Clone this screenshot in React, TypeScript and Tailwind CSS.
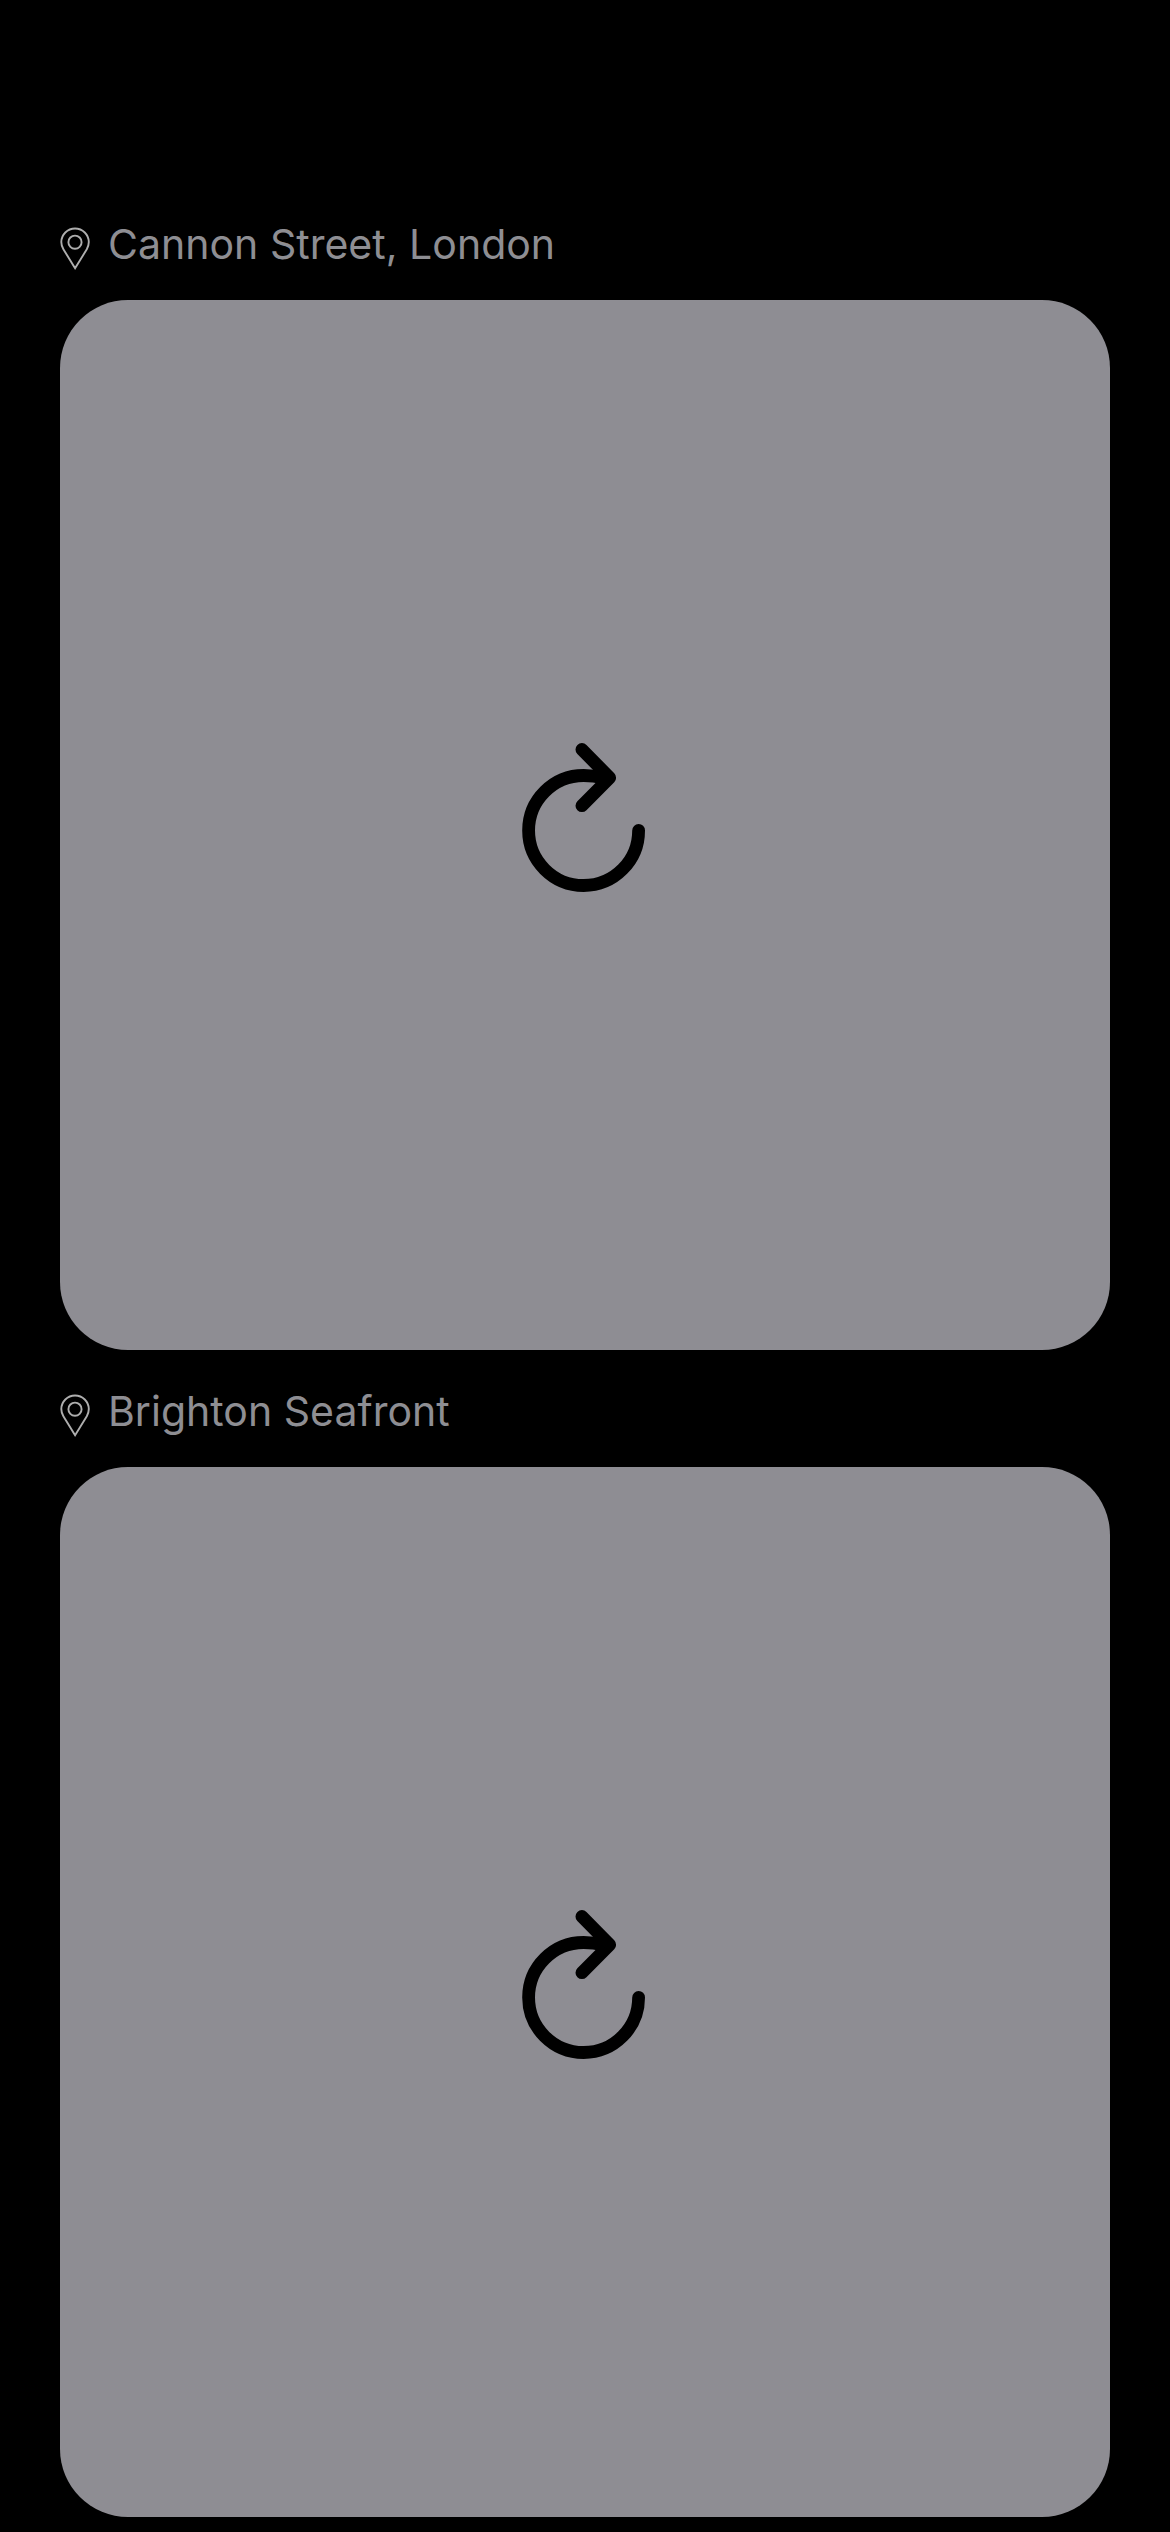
const places = ["Cannon Street, London", "Brighton Seafront"];

function PinIcon() {
  return (
    <svg width="30" height="44" viewBox="0 0 30 44" fill="none" stroke="#aeaeae" strokeWidth="1.9" className="shrink-0">
      <path d="M15.1 41.2 L3.4 22.3 C1.9 19.8 1.3 17.6 1.3 15.1 A13.75 13.6 0 0 1 28.8 15.1 C28.8 17.6 28.2 19.8 26.8 22.3 Z" />
      <circle cx="15" cy="15.2" r="6.6" />
    </svg>
  );
}

function ReloadIcon() {
  return (
    <svg width="180" height="190" viewBox="0 0 180 190" fill="none" stroke="#000" strokeWidth="12.8" strokeLinecap="round" strokeLinejoin="round">
      <path d="M138.6 110.4 A55 55 0 1 1 83.6 55.5 Q93.5 55.5 104 58" />
      <path d="M81.9 29.5 L109.7 57.7 L81.9 85.7" />
    </svg>
  );
}

export default function App() {
  return (
    <main className="flex h-[2532px] w-[1170px] flex-col overflow-hidden bg-black px-[60px] pt-[183px] font-[Inter,sans-serif]">
      {places.map((place) => (
        <section key={place}>
          <header className="flex h-[117px] items-start pt-[36px]">
            <div className="pt-[8px]">
              <PinIcon />
            </div>
            <h2 className="ml-[18px] whitespace-nowrap text-[41px] leading-[50px] tracking-[0.02px] text-[#8e8e93]">{place}</h2>
          </header>
          <div className="flex h-[1050px] items-start justify-center rounded-[68px] bg-[#8e8d93] pt-[420px]">
            <div className="ml-[10px]">
              <ReloadIcon />
            </div>
          </div>
        </section>
      ))}
    </main>
  );
}
